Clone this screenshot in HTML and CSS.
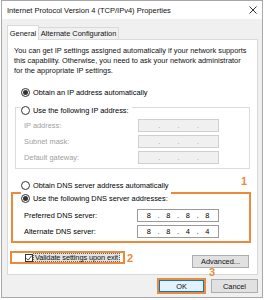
FILE: index.html
```html
<!DOCTYPE html>
<html>
<head>
<meta charset="utf-8">
<link rel="stylesheet" href="styles.css">
</head>
<body>
<div class="window">
  <div class="titlebar">
    <span class="title">Internet Protocol Version 4 (TCP/IPv4) Properties</span>
    <svg class="close" width="8" height="8" viewBox="0 0 8 8"><path d="M0.5 0.5L7.5 7.5M7.5 0.5L0.5 7.5" stroke="#333" stroke-width="1"/></svg>
  </div>
  <div class="content">
    <div class="tabs">
      <div class="tab active">General</div>
      <div class="tab">Alternate Configuration</div>
    </div>
    <div class="panel">
      <p class="intro">You can get IP settings assigned automatically if your network supports<br>this capability. Otherwise, you need to ask your network administrator<br>for the appropriate IP settings.</p>
      <div class="radio-row obtain-ip"><span class="radio checked"></span>Obtain an IP address automatically</div>
      <div class="group">
        <div class="legend"><span class="radio"></span>Use the following IP address:</div>
        <div class="field-row disabled first"><span class="flabel">IP address:</span><span class="ipbox"><span class="oct"></span><span class="dot">.</span><span class="oct"></span><span class="dot">.</span><span class="oct"></span><span class="dot">.</span><span class="oct"></span></span></div>
        <div class="field-row disabled"><span class="flabel">Subnet mask:</span><span class="ipbox"><span class="oct"></span><span class="dot">.</span><span class="oct"></span><span class="dot">.</span><span class="oct"></span><span class="dot">.</span><span class="oct"></span></span></div>
        <div class="field-row disabled"><span class="flabel">Default gateway:</span><span class="ipbox"><span class="oct"></span><span class="dot">.</span><span class="oct"></span><span class="dot">.</span><span class="oct"></span><span class="dot">.</span><span class="oct"></span></span></div>
      </div>
      <div class="radio-row obtain-dns"><span class="radio"></span>Obtain DNS server address automatically<span class="mark mark1">1</span></div>
      <div class="dns-box">
        <div class="legend"><span class="radio checked"></span>Use the following DNS server addresses:</div>
        <div class="field-row dns first"><span class="flabel">Preferred DNS server:</span><span class="ipbox"><span class="oct">8</span><span class="dot">.</span><span class="oct">8</span><span class="dot">.</span><span class="oct">8</span><span class="dot">.</span><span class="oct">8</span></span></div>
        <div class="field-row dns"><span class="flabel">Alternate DNS server:</span><span class="ipbox"><span class="oct">8</span><span class="dot">.</span><span class="oct">8</span><span class="dot">.</span><span class="oct">4</span><span class="dot">.</span><span class="oct">4</span></span></div>
      </div>
      <div class="bottom-row">
        <div class="validate-box">
          <span class="checkbox"><svg width="6" height="6" viewBox="0 0 6 6"><path d="M0.3 3.2L2.2 5.1L5.8 0.6" fill="none" stroke="#333" stroke-width="0.9"/></svg></span>
          <span class="vtext">Validate settings upon exit</span>
        </div>
        <span class="mark mark2">2</span>
        <button class="btn advanced">Advanced...</button>
      </div>
    </div>
    <div class="buttons">
      <div class="ok-wrap"><button class="btn ok">OK</button><span class="mark mark3">3</span></div>
      <button class="btn cancel">Cancel</button>
    </div>
  </div>
</div>
</body>
</html>
```

FILE: styles.css
```css
* { box-sizing: border-box; }
body {
  margin: 0;
  background: #fff;
  font-family: "Liberation Sans", Arial, sans-serif;
  font-size: 7.4px;
  color: #000;
  white-space: nowrap;
}
.window {
  margin-left: 1px;
  width: 262px;
  height: 298px;
  border: 1px solid #a8a8a8;
  background: #f0f0f0;
  display: flex;
  flex-direction: column;
}
.titlebar {
  height: 18px;
  flex: none;
  background: #fff;
  display: flex;
  align-items: center;
  justify-content: space-between;
  padding: 0 5px;
  font-size: 7.5px;
  color: #111;
}
.content {
  flex: 1;
  padding: 6px 4px 0 5px;
  display: flex;
  flex-direction: column;
}
.tabs {
  height: 14px;
  display: flex;
  align-items: flex-start;
  flex: none;
}
.tab {
  height: 12px;
  margin-top: 2px;
  width: 80px;
  border: 1px solid #d9d9d9;
  border-bottom: none;
  border-left: none;
  display: flex;
  align-items: center;
  justify-content: center;
  color: #111;
}
.tab.active {
  height: 15px;
  margin-top: 0;
  width: 32px;
  background: #fff;
  border-left: 1px solid #d9d9d9;
  position: relative;
  z-index: 2;
}
.panel {
  height: 236px;
  flex: none;
  background: #fff;
  border: 1px solid #d9d9d9;
  display: flex;
  flex-direction: column;
}
.intro {
  margin: 6px 0 0 6px;
  line-height: 10px;
  color: #111;
}
.radio-row {
  height: 12px;
  display: flex;
  align-items: center;
  margin-left: 13px;
}
.obtain-ip { margin-top: 10px; }
.obtain-dns { margin-top: 10px; }
.radio {
  width: 9px;
  height: 9px;
  border: 1px solid #333;
  border-radius: 50%;
  background: #fff;
  margin-right: 3px;
  display: flex;
  align-items: center;
  justify-content: center;
  flex: none;
}
.radio.checked::after {
  content: "";
  width: 5px;
  height: 5px;
  border-radius: 50%;
  background: #333;
}
.group {
  margin: 9px 7px 0 7px;
  border: 1px solid #dcdcdc;
  padding-bottom: 4px;
}
.legend {
  height: 12px;
  margin-top: -7px;
  margin-left: 5px;
  align-self: flex-start;
  display: inline-flex;
  align-items: center;
  background: #fff;
  padding-right: 3px;
}
.field-row {
  height: 13px;
  display: flex;
  align-items: center;
  margin-top: 3px;
  margin-left: 8px;
}
.field-row.first { margin-top: 2px; }
.flabel { width: 114px; flex: none; }
.disabled .flabel { color: #a0a0a0; }
.ipbox {
  width: 81px;
  height: 13px;
  border: 1px solid #cfcfcf;
  background: #f0f0f0;
  display: flex;
  align-items: center;
  padding: 0 1px;
}
.oct { flex: 1; text-align: center; }
.dot {
  width: 0;
  display: flex;
  justify-content: center;
  color: #a0a0a0;
}
.dns .ipbox {
  width: 82px;
  background: #fff;
  border-color: #9a9a9a;
}
.dns .dot { color: #222; }
.dns .flabel { width: 113px; }
.dns-box {
  margin: 1px 6px 0 3px;
  border: 2px solid #ec8a3c;
  padding-bottom: 3px;
  display: flex;
  flex-direction: column;
}
.dns-box .legend {
  margin-top: -2px;
  margin-left: 8px;
}
.dns-box .field-row { margin-left: 11px; }
.dns-box .field-row.first { margin-top: 5px; }
.mark {
  color: #ec8a3c;
  font-weight: bold;
  font-size: 11px;
  line-height: 10px;
}
.mark1 {
  margin-left: auto;
  margin-right: 10px;
  margin-top: -9px;
}
.bottom-row {
  display: flex;
  align-items: flex-start;
  margin-top: 8px;
}
.validate-box {
  margin-left: 2px;
  height: 13px;
  width: 115px;
  border: 2px solid #ec8a3c;
  display: flex;
  align-items: center;
  padding-left: 13px;
}
.checkbox {
  width: 8px;
  height: 8px;
  border: 1px solid #333;
  background: #fff;
  display: flex;
  align-items: center;
  justify-content: center;
  flex: none;
}
.vtext {
  height: 9px;
  line-height: 7px;
  padding: 0 1px;
  background: #e2e2e2;
  border: 1px dotted #666;
  color: #111;
  letter-spacing: -0.1px;
}
.mark2 {
  margin-left: 2px;
  margin-top: 2px;
}
.btn {
  font-family: inherit;
  font-size: 7.4px;
  color: #111;
  background: #e1e1e1;
  border: 1px solid #adadad;
  padding: 0;
  margin: 0;
  display: flex;
  align-items: center;
  justify-content: center;
}
.advanced {
  margin-left: auto;
  margin-right: 8px;
  margin-top: 4px;
  width: 57px;
  height: 13px;
}
.buttons {
  display: flex;
  justify-content: flex-end;
  align-items: flex-start;
  margin-top: 3px;
  gap: 5px;
}
.ok-wrap {
  position: relative;
  width: 49px;
  height: 16px;
  border: 2px solid #ec8a3c;
}
.ok {
  width: 100%;
  height: 100%;
  background: #e5f1fb;
  border-color: #0078d7;
}
.mark3 {
  position: absolute;
  left: 50px;
  top: -13px;
}
.cancel {
  width: 47px;
  height: 14px;
  margin-top: 1px;
}
```
